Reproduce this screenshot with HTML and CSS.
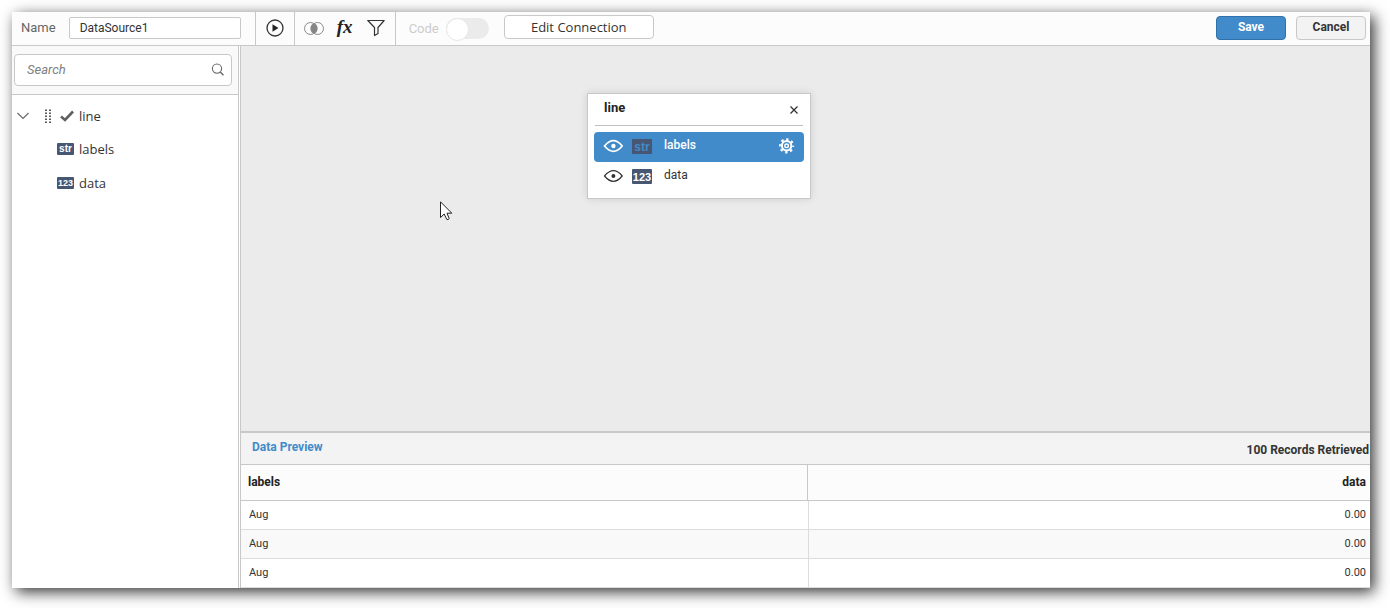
FILE: index.html
```html
<!DOCTYPE html>
<html lang="en">
<head>
    <meta charset="UTF-8">
    <meta name="viewport" content="width=device-width, initial-scale=1.0">
    <title>Data Source Designer</title>
    <link rel="stylesheet" href="styles.css">
</head>
<body>
    <div class="designer">
        <header class="toolbar">
            <div class="name-group">
                <label for="ds-name">Name</label>
                <input type="text" id="ds-name" value="DataSource1">
            </div>
            <div class="tool-group run-group">
                <button class="tool" aria-label="Run">
                    <svg width="20" height="20" viewBox="0 0 20 20">
                        <circle cx="10" cy="10" r="8" fill="none" stroke="#333" stroke-width="1.3"/>
                        <path d="M7.5 6.2 L13.5 10 L7.5 13.8 Z" fill="#222"/>
                    </svg>
                </button>
            </div>
            <div class="tool-group">
                <button class="tool" aria-label="Join">
                    <svg width="20" height="20" viewBox="0 0 20 20">
                        <path d="M10 5 A6 6 0 0 1 10 16 A6 6 0 0 1 10 5 Z" fill="#858585"/>
                        <circle cx="6.5" cy="10.5" r="6" fill="none" stroke="#8a8a8a"/>
                        <circle cx="13.5" cy="10.5" r="6" fill="none" stroke="#8a8a8a"/>
                    </svg>
                </button>
                <button class="tool fx" aria-label="Expression">fx</button>
                <button class="tool" aria-label="Filter">
                    <svg width="20" height="20" viewBox="0 0 20 20">
                        <path d="M1.8 2.5 H18.2 L12 9.5 V15.5 L8.5 17.5 V9.5 Z" fill="none" stroke="#333" stroke-width="1.2" stroke-linejoin="round"/>
                    </svg>
                </button>
            </div>
            <div class="code-group">
                <label for="code-mode">Code</label>
                <input type="checkbox" id="code-mode" class="switch" disabled>
            </div>
            <button class="btn btn-edit">Edit Connection</button>
            <div class="actions">
                <button class="btn btn-save">Save</button>
                <button class="btn btn-cancel">Cancel</button>
            </div>
        </header>

        <div class="workspace">
            <aside class="sidebar">
                <div class="search">
                    <input type="text" placeholder="Search" aria-label="Search">
                    <svg class="search-icon" width="14" height="14" viewBox="0 0 14 14">
                        <circle cx="6" cy="5.6" r="4.6" fill="none" stroke="#666" stroke-width="1.1"/>
                        <path d="M9.2 9 L12.5 12.3" stroke="#666" stroke-width="1.3"/>
                    </svg>
                </div>
                <ul class="tree">
                    <li class="tree-item">
                        <svg class="chevron" width="14" height="14" viewBox="0 0 14 14">
                            <path d="M1.5 4 L7 9.5 L12.5 4" fill="none" stroke="#666" stroke-width="1.1"/>
                        </svg>
                        <svg class="grip" width="8" height="14" viewBox="0 0 8 14">
                            <path d="M2 0.5 V14 M6 0.5 V14" stroke="#444" stroke-width="1.8" stroke-dasharray="1.6 1.4"/>
                        </svg>
                        <svg class="check" width="14" height="12" viewBox="0 0 14 12">
                            <path d="M1 6.5 L5 10 L13 1.5" fill="none" stroke="#606060" stroke-width="2.6"/>
                        </svg>
                        <span>line</span>
                    </li>
                    <li class="tree-item child"><span class="type">str</span><span>labels</span></li>
                    <li class="tree-item child"><span class="type num">123</span><span>data</span></li>
                </ul>
            </aside>

            <main class="content">
                <div class="canvas">
                    <section class="table-card">
                        <div class="card-head">
                            <h2>line</h2>
                            <button class="close" aria-label="Close">
                                <svg width="10" height="10" viewBox="0 0 10 10">
                                    <path d="M1.5 1.5 L8.5 8.5 M8.5 1.5 L1.5 8.5" stroke="#333" stroke-width="1.3"/>
                                </svg>
                            </button>
                        </div>
                        <div class="field selected">
                            <svg class="eye" width="20" height="14" viewBox="0 0 20 14">
                                <path d="M1.5 7 Q10.5 -3.6 19.2 7 Q10.5 17.6 1.5 7 Z" fill="none" stroke="currentColor" stroke-width="1.7"/>
                                <circle cx="10.4" cy="7" r="2.2" fill="currentColor"/>
                            </svg>
                            <span class="type">str</span>
                            <span class="field-name">labels</span>
                            <button class="settings" aria-label="Settings">
                                <svg width="16" height="16" viewBox="0 0 16 16">
                                    <circle cx="7.6" cy="7.8" r="6.4" fill="none" stroke="#fff" stroke-width="2.4" stroke-dasharray="2.3 2.726" stroke-dashoffset="1.15"/>
                                    <circle cx="7.6" cy="7.8" r="4.7" fill="none" stroke="#fff" stroke-width="2"/>
                                    <circle cx="7.6" cy="7.8" r="1.8" fill="none" stroke="#fff" stroke-width="1.4"/>
                                </svg>
                            </button>
                        </div>
                        <div class="field">
                            <svg class="eye" width="20" height="14" viewBox="0 0 20 14">
                                <path d="M1.5 7 Q10.5 -3.6 19.2 7 Q10.5 17.6 1.5 7 Z" fill="none" stroke="currentColor" stroke-width="1.2"/>
                                <circle cx="10.4" cy="7" r="2" fill="currentColor"/>
                            </svg>
                            <span class="type">123</span>
                            <span class="field-name">data</span>
                        </div>
                    </section>
                    <svg class="pointer" width="13" height="20" viewBox="0 0 13 20">
                        <path d="M0.5 0.8 V16.5 L4.2 13 L6.8 18.4 Q8.2 19.2 9.2 17.6 L7 12.2 H11.8 Z" fill="#fff" stroke="#222"/>
                    </svg>
                </div>

                <section class="preview">
                    <div class="preview-head">
                        <h3>Data Preview</h3>
                        <span class="records">100 Records Retrieved</span>
                    </div>
                    <table>
                        <thead>
                            <tr><th>labels</th><th>data</th></tr>
                        </thead>
                        <tbody>
                            <tr><td>Aug</td><td>0.00</td></tr>
                            <tr><td>Aug</td><td>0.00</td></tr>
                            <tr><td>Aug</td><td>0.00</td></tr>
                        </tbody>
                    </table>
                </section>
            </main>
        </div>
    </div>
</body>
</html>
```
FILE: styles.css
```css
* {
    box-sizing: border-box;
}

body {
    margin: 0;
    padding: 12px 20px 20px 12px;
    min-height: 100vh;
    display: flex;
    background: #fff;
    color: #333;
    font-family: Roboto, "Liberation Sans", sans-serif;
    font-size: 12px;
}

button, input {
    font-family: inherit;
    margin: 0;
}

.designer {
    flex: 1;
    display: flex;
    flex-direction: column;
    background: #fff;
    box-shadow: 4px 4px 14px rgba(0, 0, 0, 0.8);
}

/* Toolbar */
.toolbar {
    display: flex;
    height: 34px;
    background: #fcfcfc;
    border-bottom: 1px solid #c8c8c8;
}

.name-group {
    display: flex;
    align-items: center;
    gap: 13px;
    padding: 0 14px 2px 9px;
    font-size: 13px;
    color: #666;
}

.name-group input {
    width: 172px;
    height: 22px;
    padding: 0 10px;
    border: 1px solid #c8c8c8;
    border-radius: 2px;
    background: #fff;
    color: #333;
    font-size: 12px;
}

.tool-group {
    display: flex;
    align-items: center;
    gap: 11px;
    padding: 0 9px;
    border-left: 1px solid #c8c8c8;
}

.tool {
    display: flex;
    align-items: center;
    justify-content: center;
    width: 20px;
    height: 24px;
    padding: 0 0 2px;
    border: none;
    background: none;
    color: #222;
    cursor: pointer;
}

.fx {
    padding-bottom: 4px;
    font: italic bold 19px "Liberation Serif", serif;
}

.code-group {
    display: flex;
    align-items: center;
    gap: 7px;
    padding: 0 15px 0 13px;
    border-left: 1px solid #c8c8c8;
    color: #ccc;
    font-size: 13px;
}

.switch {
    appearance: none;
    width: 43px;
    height: 21px;
    border-radius: 11px;
    background: #ebebeb;
}

.switch::before {
    content: "";
    display: block;
    width: 21px;
    height: 21px;
    border: 1px solid #e6e6e6;
    border-radius: 50%;
    background: #fff;
}

.btn {
    height: 24px;
    padding: 0 0 2px;
    border: 1px solid #c8c8c8;
    border-radius: 4px;
    cursor: pointer;
}

.btn-edit {
    width: 150px;
    margin-top: 3px;
    padding: 0;
    background: #fff;
    color: #333;
    font: 13px "Open Sans", sans-serif;
}

.actions {
    display: flex;
    gap: 10px;
    margin-left: auto;
    padding: 4px 4px 0 0;
}

.btn-save, .btn-cancel {
    width: 70px;
    font-size: 12px;
    font-weight: bold;
}

.btn-save {
    background: #428bca;
    border-color: #3071a9;
    color: #fff;
}

.btn-cancel {
    background: #f3f3f3;
    color: #333;
}

.workspace {
    flex: 1;
    display: flex;
}

/* Sidebar */
.sidebar {
    width: 227px;
    border-right: 1px solid #c8c8c8;
    font-family: "Open Sans", sans-serif;
    font-size: 13px;
}

.search {
    position: relative;
    height: 49px;
    padding: 8px 6px 0 2px;
    background: #f9f9f9;
    border-bottom: 1px solid #c8c8c8;
}

.search input {
    width: 100%;
    height: 32px;
    padding: 0 32px 2px 12px;
    border: 1px solid #c8c8c8;
    border-radius: 4px;
    background: #fff;
    font-family: Roboto, sans-serif;
    font-size: 13px;
}

.search input::placeholder {
    color: #808080;
    font-style: italic;
}

.search-icon {
    position: absolute;
    top: 17px;
    right: 13px;
}

.tree {
    margin: 0;
    padding: 4px 4px 0;
    list-style: none;
}

.tree-item {
    display: flex;
    align-items: center;
    height: 34px;
}

.grip {
    margin-left: 14px;
}

.check {
    margin: 0 5px 0 8px;
}

.child {
    padding: 0 0 2px 41px;
    gap: 5px;
}

.type {
    display: inline-block;
    width: 17px;
    height: 12px;
    background: #475773;
    color: #fff;
    border-radius: 1px;
    font: bold 10px/12px "Liberation Sans", sans-serif;
    text-align: center;
}

.num {
    font-size: 9px;
}

/* Canvas */
.content {
    flex: 1;
    display: flex;
    flex-direction: column;
    min-width: 0;
    margin-left: 1px;
    border-left: 1px solid #c8c8c8;
}

.canvas {
    position: relative;
    flex: 1;
    background: #ebebeb;
}

.table-card {
    position: absolute;
    left: 346px;
    top: 47px;
    width: 224px;
    padding: 0 6px 6px;
    background: #fff;
    border: 1px solid #c8c8c8;
    box-shadow: 0 0 8px rgba(0, 0, 0, 0.12);
}

.card-head {
    display: flex;
    justify-content: space-between;
    height: 32px;
    margin: 0 1px 6px;
    padding: 5px 2px 0 9px;
    border-bottom: 1px solid #c0c0c0;
}

.card-head h2 {
    margin: 0;
    font-size: 13px;
    line-height: 18px;
    font-weight: bold;
    color: #222;
}

.close, .settings {
    display: flex;
    padding: 0;
    border: none;
    background: none;
    cursor: pointer;
}

.close {
    padding: 6px 2px;
}

.field {
    display: flex;
    align-items: center;
    height: 30px;
    padding: 0 9px 2px;
    border-radius: 4px;
}

.field .type {
    width: 20px;
    height: 15px;
    margin: 0 12px 0 9px;
    font-size: 11px;
    line-height: 16px;
}

.field-name {
    padding-bottom: 2px;
}

.selected {
    background: #428bca;
    color: #fff;
}

.selected .field-name {
    font-weight: 500;
}

.selected .type {
    color: #428bca;
    font-size: 12px;
}

.settings {
    margin-left: auto;
}

.pointer {
    position: absolute;
    left: 199px;
    top: 155px;
}

/* Data preview */
.preview {
    border-top: 2px solid #c8c8c8;
}

.preview-head {
    display: flex;
    justify-content: space-between;
    height: 32px;
    padding: 0 1px 0 11px;
    background: #f3f3f3;
    border-bottom: 1px solid #c8c8c8;
    line-height: 28px;
}

.preview-head h3 {
    margin: 0;
    font-size: 12px;
    font-weight: bold;
    color: #428bca;
}

.records {
    padding-top: 3px;
    font-weight: bold;
}

table {
    width: 100%;
    table-layout: fixed;
    border-spacing: 0;
}

th {
    height: 36px;
    padding: 0 4px 2px 7px;
    background: #fcfcfc;
    border-bottom: 1px solid #c8c8c8;
    font-weight: bold;
    color: #222;
    text-align: left;
}

th:first-child {
    width: 50.2%;
    border-right: 1px solid #c8c8c8;
}

td {
    height: 29px;
    padding: 0 4px 2px 8px;
    border-bottom: 1px solid #dcdcdc;
    font-size: 11px;
}

td:last-child {
    border-left: 1px solid #dcdcdc;
}

th:last-child, td:last-child {
    text-align: right;
}

tbody tr:nth-child(even) {
    background: #f9f9f9;
}
```
